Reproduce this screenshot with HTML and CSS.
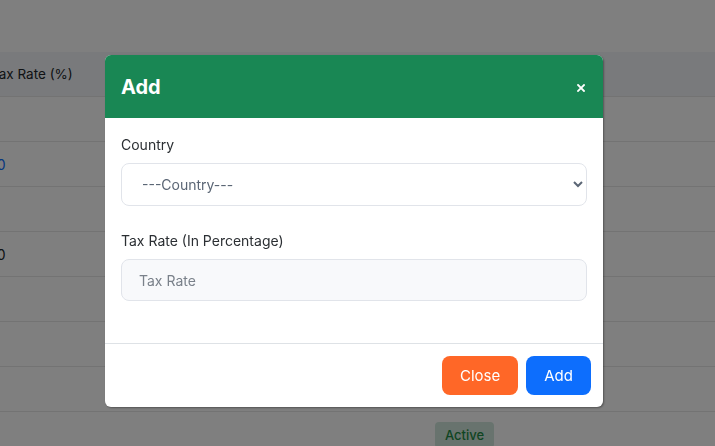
FILE: index.html
```html
<!DOCTYPE html>
<html>
<head>
<meta charset="utf-8">
<link rel="stylesheet" href="styles.css">
</head>
<body>
<div class="page">
  <div class="table">
    <div class="row head"><div class="cell c1">Tax Rate (%)</div><div class="cell c2"></div></div>
    <div class="row"><div class="cell c1"></div><div class="cell c2"></div></div>
    <div class="row"><div class="cell c1 link">10</div><div class="cell c2"></div></div>
    <div class="row"><div class="cell c1"></div><div class="cell c2"></div></div>
    <div class="row"><div class="cell c1">10</div><div class="cell c2"></div></div>
    <div class="row"><div class="cell c1"></div><div class="cell c2"></div></div>
    <div class="row"><div class="cell c1"></div><div class="cell c2"></div></div>
    <div class="row"><div class="cell c1"></div><div class="cell c2"></div></div>
    <div class="row top"><div class="cell c1"></div><div class="cell c2"><span class="badge">Active</span></div></div>
  </div>
</div>
<div class="overlay">
  <div class="modal">
    <div class="modal-header">
      <h2 class="modal-title">Add</h2>
      <button class="btn-x" aria-label="Close">
        <svg width="8" height="8" viewBox="0 0 8 8"><path d="M1 1L7 7M7 1L1 7" stroke="#fff" stroke-width="1.8" stroke-linecap="square"/></svg>
      </button>
    </div>
    <div class="modal-body">
      <div class="group">
        <label class="label">Country</label>
        <select class="field select"><option>---Country---</option></select>
      </div>
      <div class="group">
        <label class="label">Tax Rate (In Percentage)</label>
        <input class="field input" type="text" placeholder="Tax Rate">
      </div>
    </div>
    <div class="modal-footer">
      <button class="btn btn-close">Close</button>
      <button class="btn btn-add">Add</button>
    </div>
  </div>
</div>
</body>
</html>
```
FILE: styles.css
```css
* { box-sizing: border-box; }
html, body { margin: 0; padding: 0; }
body {
  width: 715px;
  height: 446px;
  overflow: hidden;
  background: #fff;
  font-family: Inter, "Liberation Sans", sans-serif;
  color: #212529;
}
.page { padding-top: 52px; }
.table { margin-left: -9px; width: 730px; }
.row {
  display: flex;
  height: 45px;
  border-bottom: 1px solid #e6e6e6;
  align-items: center;
  font-size: 14px;
}
.row.top { align-items: flex-start; padding-top: 10px; }
.row.head { background: #f3f5f8; font-size: 13.5px; }
.cell { padding: 0; }
.c1 { width: 444px; }
.c2 { flex: 1; }
.link { color: #0d6efd; }
.badge {
  display: inline-block;
  background: #d1e7dd;
  color: #1f8a45;
  font-size: 13px;
  font-weight: 500;
  padding: 5px 10px;
  border-radius: 4px;
}
.overlay {
  position: fixed;
  inset: 0;
  background: rgba(0, 0, 0, 0.5);
}
.modal {
  margin: 55px 0 0 105px;
  width: 498px;
  background: #fff;
  border-radius: 6px;
  overflow: hidden;
  box-shadow: 1px 1px 2px rgba(0,0,0,0.35);
}
.modal-header {
  background: #198754;
  height: 63px;
  display: flex;
  align-items: center;
  justify-content: space-between;
  padding: 0 16px;
}
.modal-title {
  margin: 0;
  color: #fff;
  font-size: 20px;
  font-weight: 700;
}
.btn-x {
  border: 0;
  background: transparent;
  padding: 0;
  width: 8px;
  height: 8px;
  display: flex;
  margin-top: 3px;
  margin-right: 2px;
}
.modal-body { padding: 16px 16px 17px; }
.group { margin-bottom: 24px; display: flex; flex-direction: column; }
.group:last-child { margin-bottom: 25px; }
.label {
  font-size: 14px;
  line-height: 21px;
  color: #2b2f33;
  margin-bottom: 8px;
}
.field {
  width: 466px;
  border: 1px solid #e1e4ea;
  border-radius: 8px;
  font-family: Inter, "Liberation Sans", sans-serif;
  font-size: 14px;
  outline: none;
}
.select {
  height: 43px;
  background: #fff;
  color: #5b6675;
  padding: 0 12px 0 16px;
}
.input {
  height: 42px;
  background: #f8f9fb;
  padding: 0 17px;
  color: #212529;
}
.input::placeholder { color: #7a818a; }
.modal-footer {
  border-top: 1px solid #dee2e6;
  display: flex;
  justify-content: flex-end;
  gap: 8px;
  padding: 12px 12px;
}
.btn {
  border: 0;
  height: 39px;
  border-radius: 8px;
  color: #fff;
  font-family: Inter, "Liberation Sans", sans-serif;
  font-size: 15px;
  padding: 0 18px;
}
.btn-close { background: #ff6727; width: 76px; }
.btn-add { background: #0d6efd; width: 65px; }
```
